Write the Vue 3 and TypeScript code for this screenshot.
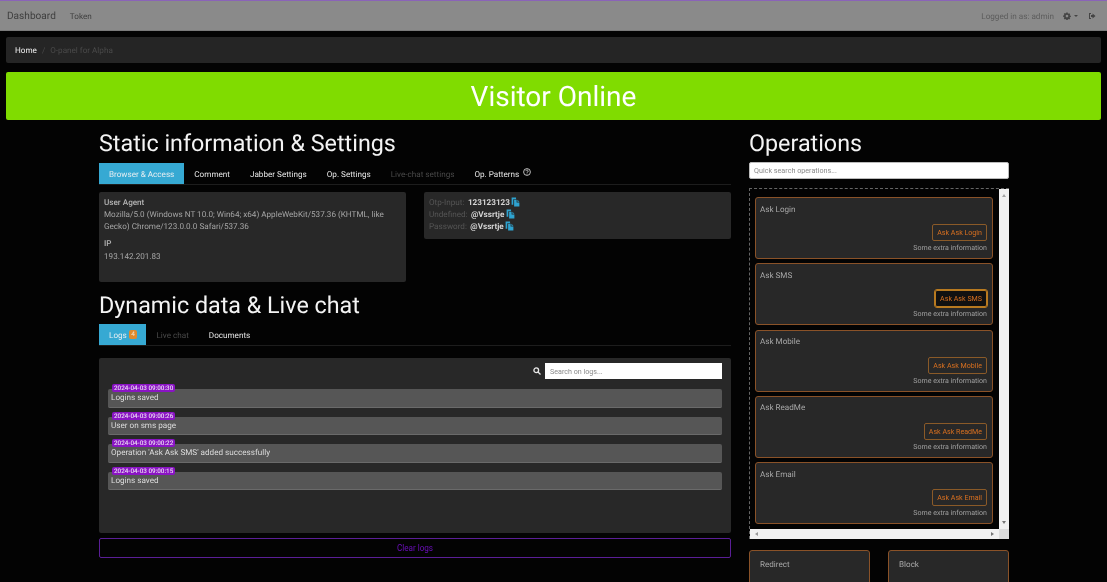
<template>
  <div class="page">
    <!-- Navbar -->
    <nav class="navbar">
      <div class="nav-left">
        <span class="brand">Dashboard</span>
        <span class="nav-link">Token</span>
      </div>
      <div class="nav-right">
        <span>Logged in as: admin</span>
        <svg class="gear" viewBox="0 0 16 16" width="8" height="8" fill="currentColor">
          <path d="M9.4 1l.3 1.9c.4.1.8.3 1.100.5l1.600-1.100 2 2-1.100 1.600c.2.300.4.700.5 1.100l1.900.3v2.800l-1.900.3c-.1.400-.3.800-.5 1.100l1.100 1.600-2 2-1.600-1.100c-.3.200-.7.400-1.100.5l-.3 1.900H6.600l-.3-1.900c-.4-.1-.8-.3-1.100-.5l-1.600 1.100-2-2 1.100-1.600c-.2-.3-.4-.7-.5-1.100L.3 9.600V6.800l1.900-.3c.1-.4.3-.8.5-1.100L1.600 3.800l2-2 1.600 1.100c.3-.2.7-.4 1.100-.5L6.600 1zM8 5.500a2.700 2.700 0 1 0 0 5.400 2.700 2.700 0 0 0 0-5.400z"/>
        </svg>
        <span class="caret"></span>
        <svg class="signout" viewBox="0 0 16 16" width="8" height="8" fill="currentColor">
          <path d="M6 2H2v12h4v-2H4V4h2zM9 3l6 5-6 5v-3H6V6h3z"/>
        </svg>
      </div>
    </nav>

    <!-- Breadcrumb -->
    <div class="breadcrumb">
      <span class="crumb-home">Home</span>
      <span class="crumb-sep">/</span>
      <span class="crumb-current">O-panel for Alpha</span>
    </div>

    <!-- Status banner -->
    <div class="banner">Visitor Online</div>

    <div class="columns">
      <!-- Left column -->
      <div class="col-main">
        <h2>Static information &amp; Settings</h2>
        <div class="tabs">
          <span
            v-for="tab in staticTabs"
            :key="tab.label"
            class="tab"
            :class="{ active: tab.active, muted: tab.muted }"
          >
            {{ tab.label }}
            <svg v-if="tab.help" class="help" viewBox="0 0 16 16" width="8" height="8" fill="none" stroke="currentColor" stroke-width="1.600">
              <circle cx="8" cy="8" r="6.800" />
              <path d="M5.800 6.300a2.200 2.200 0 1 1 3.400 1.800c-.8.500-1.200.9-1.200 1.900" />
              <path d="M8 11.300v1.500" />
            </svg>
          </span>
        </div>

        <div class="info-row">
          <div class="panel info-panel">
            <div class="info-title">User Agent</div>
            <div class="info-text">Mozilla/5.0 (Windows NT 10.0; Win64; x64) AppleWebKit/537.36 (KHTML, like Gecko) Chrome/123.0.0.0 Safari/537.36</div>
            <div class="info-title ip-title">IP</div>
            <div class="info-text">193.142.201.83</div>
          </div>
          <div class="panel fields-panel">
            <div v-for="field in fields" :key="field.label" class="field-line">
              <span class="field-label">{{ field.label }}:</span>
              <b class="field-value">{{ field.value }}</b>
              <svg class="copy" viewBox="0 0 16 18" width="9" height="10" fill="#2ea3d0">
                <path d="M1 1h8v3H4v10H1z" />
                <path d="M5.500 5H10v5h5v7H5.500z" />
                <path d="M11.500 5l3.500 3.500h-3.500z" />
              </svg>
            </div>
          </div>
        </div>

        <h2 class="second">Dynamic data &amp; Live chat</h2>
        <div class="tabs tabs-second">
          <span class="tab active logs-tab">Logs <span class="badge">4</span></span>
          <span class="tab muted">Live chat</span>
          <span class="tab">Documents</span>
        </div>

        <div class="panel logs-panel">
          <div class="logs-search">
            <svg viewBox="0 0 16 16" width="8" height="8" fill="none" stroke="#e8e8e8" stroke-width="2.600">
              <circle cx="6.500" cy="6.500" r="4.700" />
              <path d="M10 10l5 5" />
            </svg>
            <input type="text" placeholder="Search on logs..." />
          </div>
          <div class="log-list">
            <div v-for="log in logs" :key="log.time" class="log-item">
              <span class="log-time">{{ log.time }}</span>
              {{ log.text }}
            </div>
          </div>
        </div>

        <button class="clear-btn">Clear logs</button>
      </div>

      <!-- Right column -->
      <div class="col-side">
        <h2>Operations</h2>
        <input class="op-search" type="text" placeholder="Quick search operations..." />

        <div class="op-scroll">
          <div class="op-list">
            <div v-for="op in operations" :key="op.title" class="op-card">
              <div class="op-title">{{ op.title }}</div>
              <div class="op-foot">
                <button class="op-btn" :class="{ focus: op.focus }">Ask {{ op.title }}</button>
                <small>Some extra information</small>
              </div>
            </div>
          </div>
          <div class="scroll-v">
            <span class="arrow up"></span>
            <span class="arrow down"></span>
          </div>
          <div class="scroll-h">
            <span class="arrow left"></span>
            <span class="arrow right"></span>
          </div>
          <div class="scroll-corner"></div>
        </div>

        <div class="bottom-cards">
          <div class="op-card bottom-card"><div class="op-title">Redirect</div></div>
          <div class="op-card bottom-card"><div class="op-title">Block</div></div>
        </div>
      </div>
    </div>
  </div>
</template>

<script setup lang="ts">
interface TabItem {
  label: string;
  active?: boolean;
  muted?: boolean;
  help?: boolean;
}

const staticTabs: TabItem[] = [
  { label: 'Browser & Access', active: true },
  { label: 'Comment' },
  { label: 'Jabber Settings' },
  { label: 'Op. Settings' },
  { label: 'Live-chat settings', muted: true },
  { label: 'Op. Patterns', help: true },
];

const fields = [
  { label: 'Otp-Input', value: '123123123' },
  { label: 'Undefined', value: '@Vssrtje' },
  { label: 'Password', value: '@Vssrtje' },
];

const logs = [
  { time: '2024-04-03 09:00:30', text: 'Logins saved' },
  { time: '2024-04-03 09:00:26', text: 'User on sms page' },
  { time: '2024-04-03 09:00:22', text: "Operation 'Ask Ask SMS' added successfully" },
  { time: '2024-04-03 09:00:15', text: 'Logins saved' },
];

const operations = [
  { title: 'Ask Login' },
  { title: 'Ask SMS', focus: true },
  { title: 'Ask Mobile' },
  { title: 'Ask ReadMe' },
  { title: 'Ask Email' },
];
</script>

<style>
html,
body {
  background: #000;
  overflow: hidden;
}
</style>

<style scoped>
.page {
  width: 1107px;
  height: 582px;
  overflow: hidden;
  background: #030303;
  color: #d8d8d8;
  font-family: Roboto, "Liberation Sans", sans-serif;
  font-size: 8.150px;
  text-rendering: geometricPrecision;
  filter: blur(0.3px);
}

.navbar {
  height: 31px;
  box-sizing: border-box;
  border-top: 1px solid #8a63b8;
  border-bottom: 1px solid #7a7a7a;
  background: #8a8a8a;
  display: flex;
  align-items: center;
  justify-content: space-between;
  padding: 0 11px 0 7px;
  color: #3f3f3f;
}

.nav-left,
.nav-right {
  display: flex;
  align-items: center;
}

.nav-left {
  margin-top: 1px;
}

.brand {
  font-size: 10.100px;
  margin-right: 14px;
}

.nav-right {
  color: #5c5c5c;
}

.gear {
  margin-left: 9px;
  color: #444;
}

.caret {
  margin-left: 3px;
  border-left: 2px solid transparent;
  border-right: 2px solid transparent;
  border-top: 2px solid #444;
}

.signout {
  margin-left: 10px;
  color: #444;
}

.breadcrumb {
  margin: 6px 6px 0;
  height: 26px;
  box-sizing: border-box;
  background: #252525;
  border-radius: 2px;
  display: flex;
  align-items: center;
  gap: 5px;
  padding: 0 9px;
}

.crumb-home {
  color: #f2f2f2;
}

.crumb-sep,
.crumb-current {
  color: #4a4a4a;
}

.banner {
  margin: 9px 6px 0;
  height: 48px;
  background: #80dc00;
  border-radius: 2px;
  color: #fff;
  font-size: 28px;
  display: flex;
  align-items: center;
  justify-content: center;
}

.columns {
  display: flex;
  gap: 18px;
  padding: 8px 0 0 99px;
}

.col-main {
  width: 632px;
  flex: none;
}

.col-side {
  width: 260px;
  flex: none;
}

h2 {
  margin: 0;
  font-size: 23.300px;
  font-weight: 400;
  line-height: 30px;
  color: #f4f4f4;
}

h2.second {
  margin-top: 8px;
}

.tabs {
  margin-top: 5px;
  height: 22px;
  box-sizing: border-box;
  display: flex;
  border-bottom: 1px solid #1d1d1d;
}

.tabs-second {
  margin-top: 4px;
}

.tab {
  height: 21px;
  display: flex;
  align-items: center;
  gap: 4px;
  padding: 0 10px;
  color: #e8e8e8;
  white-space: nowrap;
}

.tab.active {
  background: #36a9d3;
  color: #e6eef2;
}

.tab.muted {
  color: #4a4a4a;
}

.logs-tab {
  gap: 2px;
  padding-right: 9px;
}

.help {
  margin-top: -3px;
}

.badge {
  background: #e08a2c;
  color: #f4e6d0;
  font-size: 6.500px;
  border-radius: 2px;
  padding: 1px 2.500px;
  line-height: 7px;
}

.panel {
  background: #282828;
  border-radius: 2px;
}

.info-row {
  display: flex;
  align-items: flex-start;
  gap: 18px;
  margin-top: 7px;
}

.info-panel {
  width: 307px;
  height: 90px;
  box-sizing: border-box;
  padding: 3.500px 5px;
  line-height: 12.400px;
  flex: none;
}

.info-title {
  color: #b5b5b5;
  font-weight: 500;
}

.ip-title {
  margin-top: 4.500px;
}

.info-text {
  color: #a5a5a5;
}

.fields-panel {
  width: 307px;
  height: 47px;
  box-sizing: border-box;
  padding: 3.500px 5px;
  flex: none;
}

.field-line {
  height: 12.400px;
  display: flex;
  align-items: center;
  gap: 3.500px;
}

.field-label {
  color: #555;
}

.field-value {
  color: #d4d4d4;
  font-weight: 700;
}

.copy {
  margin-left: -2px;
}

.logs-panel {
  margin-top: 12px;
  height: 175px;
  box-sizing: border-box;
  padding: 5px 9px;
}

.logs-search {
  display: flex;
  justify-content: flex-end;
  align-items: center;
  gap: 4px;
}

.logs-search input {
  width: 177px;
  height: 16px;
  box-sizing: border-box;
  border: none;
  padding: 0 5px;
  background: #fff;
  font-family: inherit;
  font-size: 7.150px;
}

input::placeholder {
  color: #8a8a8a;
}

.log-list {
  display: flex;
  flex-direction: column;
  gap: 9px;
  margin-top: 10px;
}

.log-item {
  position: relative;
  height: 18.500px;
  box-sizing: border-box;
  background: #565656;
  border-radius: 2px;
  border-bottom: 1px solid #6a6a6a;
  color: #ddd;
  padding-left: 3px;
  line-height: 17px;
}

.log-time {
  position: absolute;
  left: 4px;
  top: -5px;
  background: #8a14c4;
  color: #e8d8f0;
  font-size: 6.300px;
  font-weight: 500;
  line-height: 8px;
  padding: 0 2px;
  border-radius: 2px;
}

.clear-btn {
  width: 100%;
  height: 20px;
  margin-top: 5px;
  display: block;
  background: #030303;
  border: 1px solid #5a1e96;
  border-radius: 2px;
  color: #6a0fb8;
  font-family: inherit;
  font-size: 8.150px;
}

.op-search {
  display: block;
  width: 100%;
  height: 17px;
  margin-top: 4px;
  box-sizing: border-box;
  border: 1px solid #bbb;
  border-radius: 2px;
  padding: 0 4px;
  background: #fff;
  font-family: inherit;
  font-size: 7.200px;
}

.op-scroll {
  position: relative;
  margin-top: 9px;
  height: 351px;
  box-sizing: border-box;
  border-top: 1px dashed #666;
  border-left: 1px dashed #666;
  overflow: hidden;
}

.op-list {
  display: flex;
  flex-direction: column;
  gap: 4.300px;
  padding: 8px 16px 0 5px;
}

.op-card {
  height: 62px;
  box-sizing: border-box;
  background: #282828;
  border: 1px solid #8a5228;
  border-radius: 3px;
  padding: 5.500px 5px 6px 4px;
  display: flex;
  flex-direction: column;
  justify-content: space-between;
}

.op-title {
  color: #a8a8a8;
  font-size: 8.100px;
  line-height: 11px;
}

.op-foot {
  display: flex;
  flex-direction: column;
  align-items: flex-end;
  gap: 2px;
}

.op-foot small {
  color: #a0a0a0;
  font-size: 7.050px;
  line-height: 9px;
}

.op-btn {
  height: 17px;
  padding: 0 4px;
  background: transparent;
  border: 1px solid #8a5a28;
  border-radius: 2px;
  color: #d87020;
  font-family: inherit;
  font-size: 7.100px;
}

.op-btn.focus {
  outline: 1px solid #b87a20;
  border: 1px solid #b87a20;
  background: #111;
}

.scroll-v,
.scroll-h,
.scroll-corner {
  position: absolute;
  background: #f1f1f1;
}

.scroll-v {
  top: 0;
  right: 0;
  width: 10px;
  bottom: 10px;
}

.scroll-h {
  left: 0;
  right: 10px;
  bottom: 0;
  height: 10px;
}

.scroll-corner {
  right: 0;
  bottom: 0;
  width: 10px;
  height: 10px;
  background: #ddd;
}

.arrow {
  position: absolute;
  width: 0;
  height: 0;
  border: 2px solid transparent;
}

.arrow.up {
  top: 3px;
  left: 3px;
  border-bottom: 3px solid #a5a5a5;
}

.arrow.down {
  bottom: 3px;
  left: 3px;
  border-top: 3px solid #777;
}

.arrow.left {
  top: 3px;
  left: 3px;
  border-right: 3px solid #999;
}

.arrow.right {
  top: 3px;
  right: 3px;
  border-left: 3px solid #777;
}

.bottom-cards {
  display: flex;
  gap: 18px;
  margin-top: 11px;
}

.bottom-card {
  flex: 1;
  justify-content: flex-start;
  padding: 7.500px 10px;
}
</style>
